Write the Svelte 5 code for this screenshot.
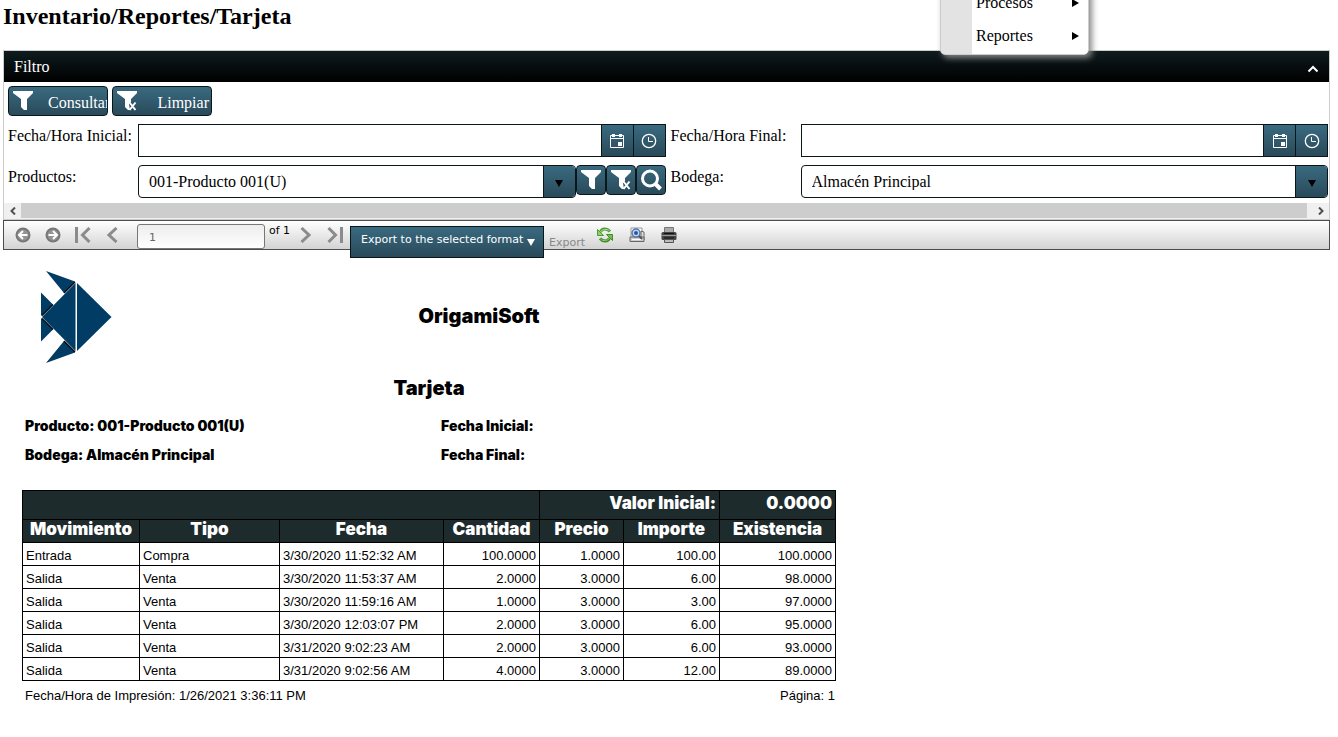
<script>
	let columns = [
		{ key: 'movimiento', label: 'Movimiento', width: 117 },
		{ key: 'tipo', label: 'Tipo', width: 140 },
		{ key: 'fecha', label: 'Fecha', width: 164 },
		{ key: 'cantidad', label: 'Cantidad', width: 96, number: true },
		{ key: 'precio', label: 'Precio', width: 84, number: true },
		{ key: 'importe', label: 'Importe', width: 96, number: true },
		{ key: 'existencia', label: 'Existencia', width: 116, number: true }
	];

	let rows = [
		{ movimiento: 'Entrada', tipo: 'Compra', fecha: '3/30/2020 11:52:32 AM', cantidad: '100.0000', precio: '1.0000', importe: '100.00', existencia: '100.0000' },
		{ movimiento: 'Salida', tipo: 'Venta', fecha: '3/30/2020 11:53:37 AM', cantidad: '2.0000', precio: '3.0000', importe: '6.00', existencia: '98.0000' },
		{ movimiento: 'Salida', tipo: 'Venta', fecha: '3/30/2020 11:59:16 AM', cantidad: '1.0000', precio: '3.0000', importe: '3.00', existencia: '97.0000' },
		{ movimiento: 'Salida', tipo: 'Venta', fecha: '3/30/2020 12:03:07 PM', cantidad: '2.0000', precio: '3.0000', importe: '6.00', existencia: '95.0000' },
		{ movimiento: 'Salida', tipo: 'Venta', fecha: '3/31/2020 9:02:23 AM', cantidad: '2.0000', precio: '3.0000', importe: '6.00', existencia: '93.0000' },
		{ movimiento: 'Salida', tipo: 'Venta', fecha: '3/31/2020 9:02:56 AM', cantidad: '4.0000', precio: '3.0000', importe: '12.00', existencia: '89.0000' }
	];

	let menu = ['Procesos', 'Reportes'];

	let open = true;
	let fechaInicial = '';
	let fechaFinal = '';
	let page = '1';

	function limpiar() {
		fechaInicial = '';
		fechaFinal = '';
	}
</script>

{#snippet funnel()}
	<svg width="22" height="22" viewBox="0 0 22 22"><path d="M1 1h20v2l-6 6v11h-3l-3-3V9L1 3z" fill="#fff" /></svg>
{/snippet}

{#snippet funnelClear()}
	<svg width="22" height="22" viewBox="0 0 22 22">
		<path d="M1 1h20v2l-6 6v3l-2 2 1 6h-2l-3-3V9L1 3z" fill="#fff" />
		<path d="M13.500 12.500l6 7.500M19.500 12.500l-6 7.500" stroke="#fff" stroke-width="2" />
	</svg>
{/snippet}

{#snippet calendar()}
	<svg width="16" height="16" viewBox="0 0 16 16">
		<path d="M1.500 2.500h13v12h-13zM1 5.500h14" fill="none" stroke="#fff" />
		<path d="M3 1h3v3H3zM10 1h3v3h-3zM9 9h4v4H9z" fill="#fff" />
	</svg>
{/snippet}

{#snippet clock()}
	<svg width="16" height="16" viewBox="0 0 16 16" fill="none" stroke="#fff">
		<circle cx="8" cy="8" r="6.700" stroke-width="1.300" />
		<path d="M7.500 4v4.500H12" />
	</svg>
{/snippet}

{#snippet arrow()}
	<svg width="8" height="7" viewBox="0 0 8 7"><path d="M0 0h8L4 7z" fill="currentColor" /></svg>
{/snippet}

<main>
	<h2>Inventario/Reportes/Tarjeta</h2>

	<nav class="menu">
		{#each menu as item}
			<a href="#{item}">
				{item}
				<svg width="7" height="8" viewBox="0 0 7 8"><path d="M0 0l7 4-7 4z" /></svg>
			</a>
		{/each}
	</nav>

	<section class="panel">
		<header>
			<span>Filtro</span>
			<button class="toggle" aria-label="Contraer" on:click={() => (open = !open)}>
				<svg width="12" height="8" viewBox="0 0 12 8"><path d="M1.500 6.500L6 2l4.500 4.500" fill="none" stroke="#fff" stroke-width="2" /></svg>
			</button>
		</header>

		{#if open}
			<div class="actions">
				<button class="btn">{@render funnel()}<span>Consultar</span></button>
				<button class="btn" on:click={limpiar}>{@render funnelClear()}<span>Limpiar</span></button>
			</div>

			<div class="filters">
				<label for="inicial">Fecha/Hora Inicial:</label>
				<div class="field">
					<input type="text" id="inicial" bind:value={fechaInicial}>
					<button class="addon" aria-label="Fecha inicial">{@render calendar()}</button>
					<button class="addon" aria-label="Hora inicial">{@render clock()}</button>
				</div>
				<label for="final" class="second">Fecha/Hora Final:</label>
				<div class="field">
					<input type="text" id="final" bind:value={fechaFinal}>
					<button class="addon" aria-label="Fecha final">{@render calendar()}</button>
					<button class="addon" aria-label="Hora final">{@render clock()}</button>
				</div>

				<label for="productos">Productos:</label>
				<div class="group">
					<div class="field rounded">
						<select id="productos">
							<option>001-Producto 001(U)</option>
						</select>
						<span class="addon down">{@render arrow()}</span>
					</div>
					<button class="btn icon" aria-label="Filtrar">{@render funnel()}</button>
					<button class="btn icon" aria-label="Quitar filtro">{@render funnelClear()}</button>
					<button class="btn icon" aria-label="Buscar">
						<svg width="22" height="22" viewBox="0 0 22 22" fill="none" stroke="#fff"><circle cx="10" cy="9.500" r="7.500" stroke-width="3" /><path d="M15 14.500l5.500 5.500" stroke-width="4" /></svg>
					</button>
				</div>
				<label for="bodega" class="second">Bodega:</label>
				<div class="field rounded">
					<select id="bodega">
						<option>Almacén Principal</option>
					</select>
					<span class="addon down">{@render arrow()}</span>
				</div>
			</div>

			<div class="scroll">
				<button aria-label="Izquierda"><svg width="6" height="8" viewBox="0 0 6 8"><path d="M5 .5L1.500 4 5 7.500" /></svg></button>
				<div class="thumb"></div>
				<button class="right" aria-label="Derecha"><svg width="6" height="8" viewBox="0 0 6 8"><path d="M1 .5L4.500 4 1 7.500" /></svg></button>
			</div>
		{/if}
	</section>

	<div class="toolbar">
		<button class="tool" aria-label="Atrás">
			<svg width="16" height="16" viewBox="0 0 16 16"><circle cx="8" cy="8" r="7.500" fill="#777" /><circle cx="8" cy="8" r="5.500" fill="#939393" /><path d="M12.500 8H4.500M8 4L4 8l4 4" fill="none" stroke="#fff" stroke-width="2" /></svg>
		</button>
		<button class="tool" aria-label="Adelante">
			<svg width="16" height="16" viewBox="0 0 16 16"><circle cx="8" cy="8" r="7.500" fill="#777" /><circle cx="8" cy="8" r="5.500" fill="#939393" /><path d="M3.500 8h8M8 4l4 4-4 4" fill="none" stroke="#fff" stroke-width="2" /></svg>
		</button>
		<button class="tool" aria-label="Primera página">
			<svg class="step" width="16" height="16" viewBox="0 0 16 16"><path d="M1.500 0v16M14.500 1L7.500 8l7 7" /></svg>
		</button>
		<button class="tool" aria-label="Página anterior">
			<svg class="step" width="16" height="16" viewBox="0 0 16 16"><path d="M11.500 1L4 8l7.500 7" /></svg>
		</button>
		<input class="page" type="text" aria-label="Página" bind:value={page}>
		<span class="total">of 1</span>
		<button class="tool" aria-label="Página siguiente">
			<svg class="step" width="16" height="16" viewBox="0 0 16 16"><path d="M4.500 1L12 8l-7.500 7" /></svg>
		</button>
		<button class="tool" aria-label="Última página">
			<svg class="step" width="16" height="16" viewBox="0 0 16 16"><path d="M1.500 1l7 7-7 7M14.500 0v16" /></svg>
		</button>
		<div class="format">
			<select aria-label="Formato">
				<option>Export to the selected format</option>
			</select>
			{@render arrow()}
		</div>
		<a class="export" href="#export">Export</a>
		<button class="tool wide" aria-label="Actualizar">
			<svg width="16" height="16" viewBox="0 0 16 16" fill="none">
				<path d="M3.500 5C5 1 10 1 13 4.500" stroke="#4b9a33" stroke-width="3" />
				<path d="M3.500 5C5 2 10 1.500 12.500 4" stroke="#b4e394" stroke-width="1" />
				<path d="M.5 2.500v6h6z" fill="#8fd06c" stroke="#4b9a33" />
				<path d="M12.500 11C11 15 6 15 3 11.500" stroke="#3f8a2a" stroke-width="3" />
				<path d="M12.500 11C11 14 6 14.500 3.500 12" stroke="#8fd06c" stroke-width="1" />
				<path d="M15.500 13.500v-6h-6z" fill="#79c054" stroke="#3f8a2a" />
			</svg>
		</button>
		<button class="tool wide" aria-label="Vista previa">
			<svg width="16" height="16" viewBox="0 0 16 16">
				<path d="M2 1h11v9H2z" fill="#fff" stroke="#999" />
				<path d="M12 4l3 1v8h-3z" fill="#ddd" stroke="#666" />
				<path d="M1 10h14v4.500H1z" fill="#ccc" stroke="#666" />
				<path d="M3 12.500h10" stroke="#fff" />
				<circle cx="7" cy="6" r="4" fill="#c4daf5" stroke="#5476a8" stroke-width="1.500" />
				<circle cx="7" cy="6" r="2" fill="#2855a0" />
				<path d="M10 9l3 3" stroke="#555" stroke-width="2" />
			</svg>
		</button>
		<button class="tool wide" aria-label="Imprimir">
			<svg width="16" height="16" viewBox="0 0 16 16">
				<path d="M3.500.5h9V6h-9z" fill="#aaa" stroke="#777" />
				<rect x=".5" y="5" width="15" height="8" rx="1.500" fill="#444" />
				<path d="M1 8.500h14" stroke="#999" />
				<path d="M3 6.500h10M3 11h10" stroke="#111" />
				<path d="M3.500 12.500h9v3h-9z" fill="#bbb" stroke="#555" />
			</svg>
		</button>
	</div>

	<article class="report">
		<div class="brand">
			<svg width="71" height="92" viewBox="0 0 71 92">
				<g fill="#003c63">
					<path d="M36 12l34.500 34L36 80z" />
					<path d="M34.500 12v68L1 46z" />
					<path d="M5 0l29 10.500L23 22zM5 92l29-10.500L23 70z" />
					<path d="M0 21.500l12 12L0 45zM0 70.500l12-12L0 47z" />
				</g>
				<path d="M34 11L23 22M12 33.500L1 44.500M1 47.500l11 11M23 70L34 81" stroke="#000a14" stroke-width="1.500" />
			</svg>
			<h1>OrigamiSoft</h1>
		</div>
		<h1 class="name">Tarjeta</h1>

		<div class="info">
			<span>Producto: 001-Producto 001(U)</span>
			<span>Fecha Inicial:</span>
			<span>Bodega: Almacén Principal</span>
			<span>Fecha Final:</span>
		</div>

		<table>
			<colgroup>
				{#each columns as col}
					<col style="width: {col.width}px">
				{/each}
			</colgroup>
			<thead>
				<tr class="initial">
					<th colspan="4"></th>
					<th colspan="2">Valor Inicial:</th>
					<th>0.0000</th>
				</tr>
				<tr>
					{#each columns as col}
						<th>{col.label}</th>
					{/each}
				</tr>
			</thead>
			<tbody>
				{#each rows as row}
					<tr>
						{#each columns as col}
							<td class:number={col.number}>{row[col.key]}</td>
						{/each}
					</tr>
				{/each}
			</tbody>
		</table>

		<footer>
			<span>Fecha/Hora de Impresión: 1/26/2021 3:36:11 PM</span>
			<span>Página: 1</span>
		</footer>
	</article>
</main>

<style>
:global(body) {
	background: #fff;
}

main {
	position: relative;
	padding: 2px 8px 0 3px;
	font-family: "Liberation Serif", serif;
	font-size: 16px;
	color: #000;
}

main * {
	box-sizing: border-box;
}

svg {
	display: block;
	flex: none;
}

button, input, select {
	font: inherit;
	margin: 0;
	padding: 0;
	border: none;
	border-radius: 0;
	background: none;
	outline: none;
}

select {
	appearance: none;
	cursor: pointer;
}

h2 {
	margin: 0 0 20px;
	font-size: 24px;
	line-height: 28px;
}

/* floating menu */
.menu {
	position: absolute;
	top: -80px;
	left: 940px;
	z-index: 2;
	display: flex;
	flex-direction: column;
	justify-content: flex-end;
	width: 149px;
	height: 135px;
	padding-bottom: 2px;
	border: 1px solid #ccc;
	border-radius: 5px;
	background: linear-gradient(to right, #e3e3e3 31px, #fff 31px);
	box-shadow: 3px 3px 6px #888;
}

.menu a {
	display: flex;
	align-items: center;
	justify-content: space-between;
	height: 33px;
	padding: 0 9px 0 35px;
	color: #000;
	text-decoration: none;
}

/* filter panel */
.panel {
	border: 1px solid #ccc;
}

.panel header {
	display: flex;
	align-items: center;
	justify-content: space-between;
	height: 31px;
	padding: 0 10px;
	background: linear-gradient(#0e1b1e, #000);
	color: #fff;
}

.toggle {
	padding-top: 4px;
}

.actions {
	display: flex;
	gap: 4px;
	padding: 4px 4px 8px;
}

.btn {
	display: flex;
	align-items: center;
	justify-content: space-between;
	width: 100px;
	height: 30px;
	padding-left: 3px;
	overflow: hidden;
	border: 1px solid #0b1619;
	border-radius: 4px;
	background: linear-gradient(#3a6a80, #294a5a);
	color: #fff;
}

.btn span {
	padding: 4px 2px 0 14px;
}

.filters {
	display: grid;
	grid-template-columns: 130px 1fr 135px 1fr;
	row-gap: 8px;
	padding: 0 1px 5px 4px;
}

.filters label {
	padding-top: 3px;
	line-height: 18px;
}

.filters .second {
	padding-left: 5px;
}

.field {
	display: flex;
	flex: 1;
	height: 33px;
	min-width: 0;
	overflow: hidden;
	border: 1px solid #0b1619;
}

.field input, .field select {
	flex: 1;
	min-width: 0;
	padding: 0 10px;
}

.rounded {
	border-radius: 4px;
}

.addon {
	display: flex;
	align-items: center;
	justify-content: center;
	width: 32px;
	border-left: 1px solid #0b1619;
	background: linear-gradient(#3a6a80, #294a5a);
}

.down {
	padding-top: 4px;
}

.group {
	display: flex;
}

.icon {
	justify-content: center;
	width: 30px;
	padding: 0;
}

.scroll {
	display: flex;
	height: 16px;
	padding-bottom: 1px;
	background: #f0f0f0;
}

.scroll button {
	display: flex;
	align-items: center;
	justify-content: center;
	width: 17px;
}

.scroll .right {
	justify-content: flex-end;
	width: 22px;
	padding-right: 5px;
}

.scroll path {
	fill: none;
	stroke: #505050;
	stroke-width: 2;
}

.thumb {
	flex: 1;
	background: #cdcdcd;
}

/* report viewer toolbar */
.toolbar {
	display: flex;
	align-items: flex-start;
	height: 30px;
	padding-left: 4px;
	border: 1px solid #4d4d4d;
	background: linear-gradient(#fff, #d3d3d3);
	font-family: "DejaVu Sans", sans-serif;
	font-size: 11px;
}

.tool {
	display: flex;
	justify-content: center;
	width: 30px;
	padding-top: 6px;
}

.wide {
	width: 32px;
}

.step path {
	fill: none;
	stroke: #8b8b8b;
	stroke-width: 3;
}

.page {
	width: 128px;
	height: 25px;
	margin: 3px 4px 0 9px;
	padding: 2px 11px 0;
	border: 1px solid #777;
	border-radius: 3px;
	background: linear-gradient(#ededed, #fff);
	color: #666;
}

.total {
	padding: 3px 0 0;
	line-height: 14px;
}

.format {
	display: flex;
	align-items: center;
	width: 194px;
	height: 32px;
	margin: 5px 5px 0 0;
	padding-right: 8px;
	border: 1px solid #0b1619;
	background: linear-gradient(#3a6a80, #294a5a);
	color: #fff;
}

.format select {
	flex: 1;
	min-width: 0;
	height: 26px;
	margin-bottom: 6px;
	padding-left: 10px;
	color: #fff;
}

.export {
	margin-right: 4px;
	padding-top: 15px;
	line-height: 14px;
	color: #888;
	text-decoration: none;
}

/* report */
.report {
	width: 814px;
	margin: 21px 0 0 19px;
	font-family: "Liberation Sans", Arial, sans-serif;
	font-size: 13px;
}

.report h1, .report th, .info {
	font-family: Inter, sans-serif;
	font-weight: 900;
}

.report h1 {
	margin: 0;
	font-size: 20px;
	line-height: 24px;
	text-align: center;
}

.brand {
	display: flex;
	padding-left: 19px;
}

.brand h1 {
	flex: 1;
	padding: 33px 0 0 10px;
}

.report .name {
	padding: 13px 0 17px;
}

.info {
	display: grid;
	grid-template-columns: 416px 1fr;
	row-gap: 11px;
	padding-left: 3px;
	font-size: 14px;
	line-height: 18px;
}

table {
	width: 100%;
	margin-top: 26px;
	border-collapse: collapse;
	table-layout: fixed;
}

th, td {
	height: 23px;
	padding: 4px 3px 0;
	border: 1px solid #000;
	line-height: 16px;
	text-align: left;
	white-space: nowrap;
}

th {
	padding: 0 3px 4px;
	background: #1e2b2d;
	color: #fff;
	font-size: 17px;
	text-align: center;
}

.initial th {
	height: 29px;
	text-align: right;
}

.number {
	text-align: right;
}

footer {
	display: flex;
	justify-content: space-between;
	padding: 6px 1px 0 3px;
	line-height: 18px;
}
</style>
